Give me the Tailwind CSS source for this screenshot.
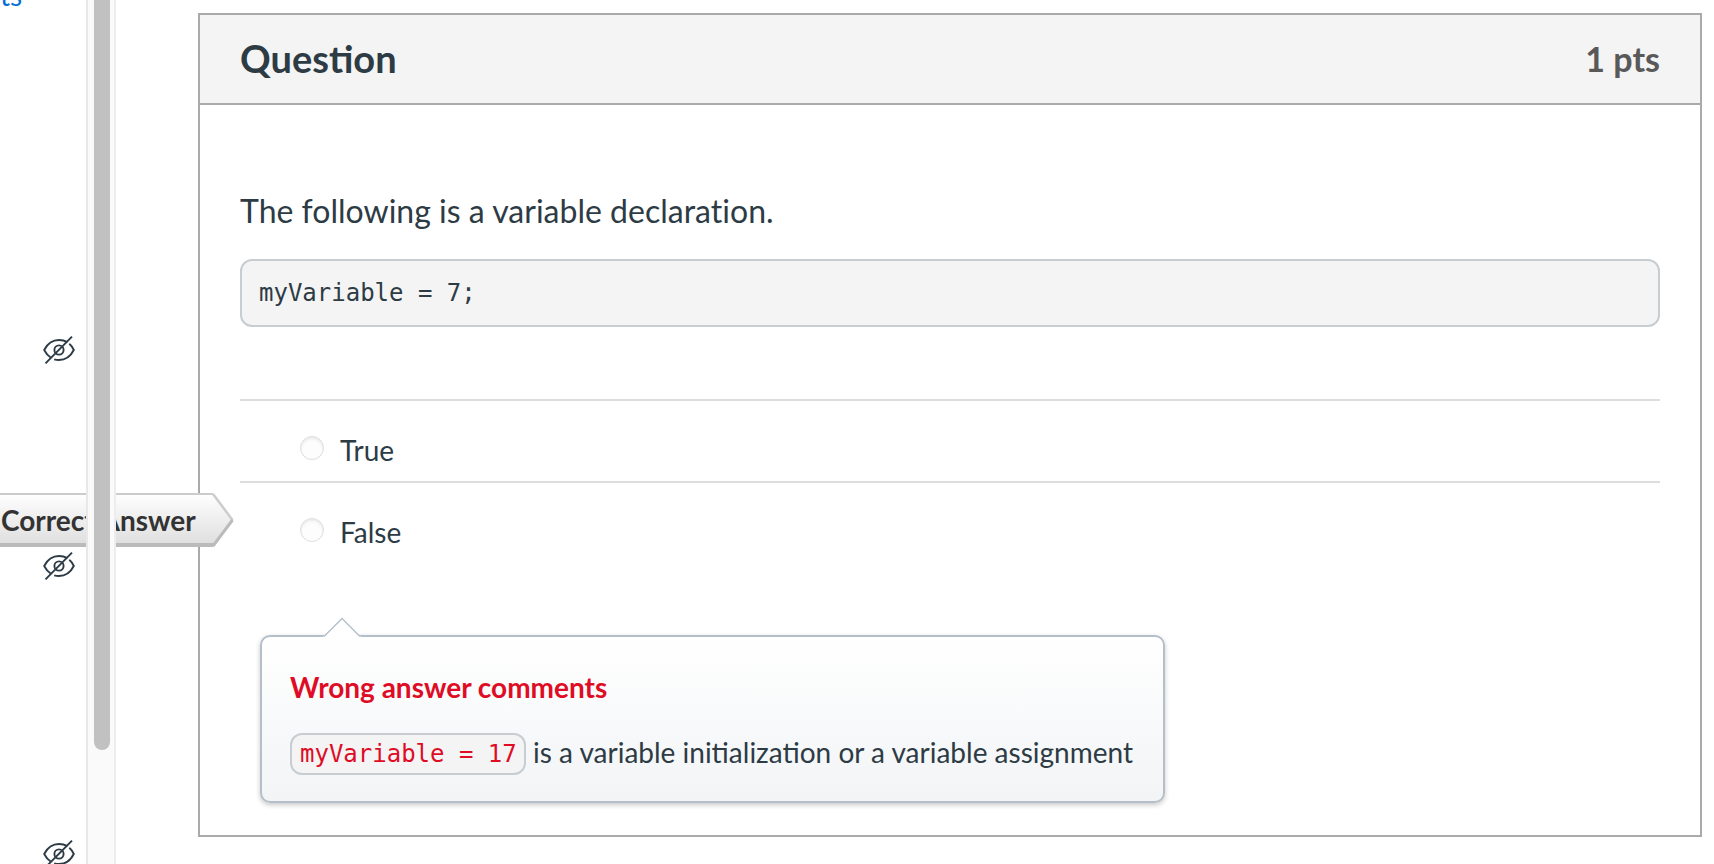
<!DOCTYPE html>
<html lang="en">
<head>
<meta charset="utf-8">
<title>Question</title>
<script src="https://cdn.jsdelivr.net/npm/@tailwindcss/browser@4"></script>
</head>
<body class="relative flex h-[864px] w-[1714px] overflow-hidden bg-white font-[Lato,sans-serif] text-[#2d3b45]">
<svg class="hidden">
  <symbol id="eye-off" viewBox="0 0 32 28">
    <g fill="none" stroke="#2d3b45" stroke-width="1.9">
      <path d="M24.5 6.2C21.8 4.7 19 4 16 4 9.300 4 4.500 7.500 1.200 14c1.700 3.300 3.800 5.900 6.500 7.500"/>
      <path d="M26.300 7.700c1.800 1.500 3.300 3.600 4.500 6.300C27.500 20.500 22.700 24 16 24c-1.700 0-3.300-.2-4.800-.7"/>
      <circle cx="16" cy="14" r="4.600"/>
      <path d="M2.500 27.300 29 .7"/>
    </g>
  </symbol>
</svg>

<aside class="relative z-0 h-full w-[86px] shrink-0">
  <a class="absolute -top-[25px] left-0 text-[28px] leading-[40px] text-[#0770d6]">ts</a>
  <svg class="absolute left-[43px] top-[336px] h-7 w-8"><use href="#eye-off"/></svg>
  <svg class="absolute left-[43px] top-[552px] h-7 w-8"><use href="#eye-off"/></svg>
  <svg class="absolute left-[43px] top-[840px] h-7 w-8"><use href="#eye-off"/></svg>
</aside>

<div class="relative z-20 flex h-full w-[30px] shrink-0 border-x-2 border-l-[#e8e8e8] border-r-[#ededed] bg-[#fafafa] pl-1.5">
  <div class="h-[750px] w-4 rounded-b-full bg-[#c1c1c1]"></div>
</div>

<main class="ml-[82px] mt-[13px] h-[824px] w-[1504px] shrink-0 border-2 border-[#aaa]">
  <header class="flex h-[90px] items-center justify-between border-b-2 border-[#aaa] bg-[#f4f4f4] px-10 font-bold">
    <h1 class="pb-0.5 text-[38px] leading-[48px]">Question</h1>
    <span class="text-[34px] leading-[48px] text-[#595959]">1 pts</span>
  </header>
  <div class="px-10 pt-[82px]">
    <p class="text-[32px] leading-[48px] tracking-[0.01px] [font-variant-ligatures:common-ligatures]">The following is a variable declaration.</p>
    <pre class="mt-6 h-[68px] rounded-xl border-2 border-[#c7cdd1] bg-[#f4f4f4] px-[17px] font-['DejaVu_Sans_Mono',monospace] text-[24px] leading-[64px]">myVariable = 7;</pre>
    <div class="mt-[72px] flex h-[82px] border-t-2 border-[#ddd] pl-[60px] pt-[35px]">
      <span class="size-6 rounded-full border border-[#ddd] bg-[#fdfdfd] shadow-[inset_0_2px_3px_rgba(0,0,0,0.08)]"></span>
      <span class="ml-4 text-[28px] leading-[28px]">True</span>
    </div>
    <div class="flex h-[82px] border-t-2 border-[#ddd] pl-[60px] pt-[35px]">
      <span class="size-6 rounded-full border border-[#ddd] bg-[#fdfdfd] shadow-[inset_0_2px_3px_rgba(0,0,0,0.08)]"></span>
      <span class="ml-4 text-[28px] leading-[28px]">False</span>
    </div>
    <section class="relative ml-5 mt-[72px] h-[168px] w-[905px] rounded-[10px] border-2 border-[#b4bfc9] bg-linear-to-b from-white to-[#f2f4f6] px-7 pt-[29px] shadow-[0_2px_5px_rgba(0,0,0,0.22)]">
      <svg class="absolute -top-5 left-[61px] h-5 w-[38px]" viewBox="0 0 38 20"><path d="M0 20 19 1.500 38 20" fill="#fff"/><path d="M1 19.500 19 1.500 37 19.500" fill="none" stroke="#b4bfc9" stroke-width="1.400"/></svg>
      <h2 class="text-[28px] font-bold leading-[42px] text-[#df0c26]">Wrong answer comments</h2>
      <p class="mt-[25px] flex items-start text-[28px] leading-[38px] whitespace-nowrap"><code class="h-[42px] w-[236px] rounded-xl border-2 border-[#c7cdd1] bg-[#f4f4f4] px-2 font-['DejaVu_Sans_Mono',monospace] text-[24px] leading-[39px] text-[#df0c26]">myVariable = 17</code><span class="ml-[7px]">is a variable initialization or a variable assignment</span></p>
    </section>
  </div>
</main>

<div class="absolute left-0 top-[493px] z-10 h-[54px] w-[234px]">
  <svg class="absolute inset-0" width="234" height="54" viewBox="0 0 234 54">
    <defs><linearGradient id="tag" x1="0" y1="0" x2="0" y2="1"><stop offset="0" stop-color="#fff"/><stop offset="1" stop-color="#ddd"/></linearGradient></defs>
    <path d="M0 0H213L233 27 213 54H0Z" fill="url(#tag)"/>
    <path d="M0 1H213" stroke="#ccc" stroke-width="2"/>
    <path d="M0 52H213" stroke="#bbb" stroke-width="4"/>
    <path d="M213 1 232.500 27" fill="none" stroke="#ccc" stroke-width="2.500"/>
    <path d="M232.500 27 213 53" fill="none" stroke="#bbb" stroke-width="3"/>
  </svg>
  <span class="relative block pl-px text-[28px] font-bold leading-[54px] text-[#333] whitespace-nowrap">Correct Answer</span>
</div>
</body>
</html>
